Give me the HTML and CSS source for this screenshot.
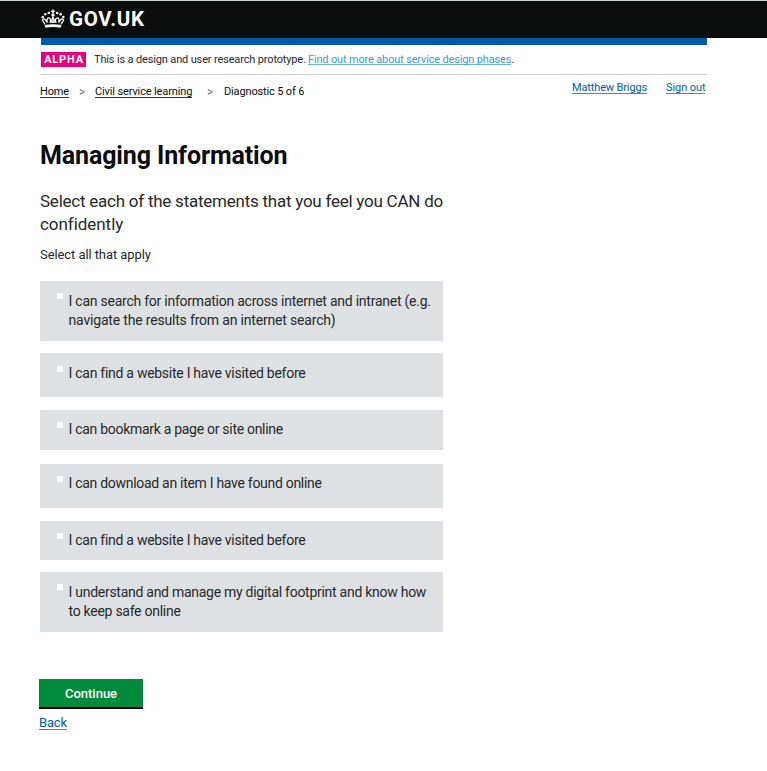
FILE: index.html
```html
<!DOCTYPE html>
<html lang="en">
<head>
<meta charset="utf-8">
<title>Managing Information</title>
<link rel="stylesheet" href="styles.css">
</head>
<body>
<header class="top">
  <svg class="crown" viewBox="0 0 24 20" width="24" height="20" aria-hidden="true">
    <g fill="#fff">
      <path d="M11.200 0.500h1.600v1.200h1.300v1.300h-1.300v1.200h-1.600V3H9.900V1.700h1.300z"/>
      <circle cx="12" cy="6" r="1.700"/>
      <circle cx="7.800" cy="4" r="1.300"/><circle cx="16.200" cy="4" r="1.300"/>
      <circle cx="4.300" cy="5.200" r="1.300"/><circle cx="19.700" cy="5.200" r="1.300"/>
      <circle cx="1.700" cy="8" r="1.300"/><circle cx="22.300" cy="8" r="1.300"/>
      <path d="M3.800 16Q12 14.300 20.200 16L19.700 18.700Q12 17.500 4.300 18.700z"/>
    </g>
    <g fill="none" stroke="#fff" stroke-width="1.300">
      <path d="M4.100 15.500L1.400 11Q2.500 9 4.100 10.500L6.200 13.500Q5.500 9 7.600 8.800T9.700 13L12 8.500L14.300 13Q14.300 9 16.400 8.800T17.800 13.500L19.900 10.500Q21.500 9 22.600 11L19.900 15.500"/>
      <path d="M8.300 13.200H15.700M12 8v6"/>
    </g>
  </svg>
  <span class="brand">GOV.UK</span>
</header>
<div class="page">
  <div class="phase">
    <strong class="tag">ALPHA</strong>
    <span class="phase-text">This is a design and user research prototype.</span>
    <span class="phase-more"><a href="#">Find out more about service design phases</a>.</span>
  </div>
  <div class="nav">
    <nav class="crumbs">
      <a class="home" href="#">Home</a><span class="sep">&gt;</span><a class="csl" href="#">Civil service learning</a><span class="sep wide">&gt;</span><span class="step">Diagnostic 5 of 6</span>
    </nav>
    <div class="account"><a class="user" href="#">Matthew Briggs</a><a class="out" href="#">Sign out</a></div>
  </div>
  <main>
    <h1>Managing Information</h1>
    <h2>Select each of the statements that you feel you CAN do<br><span class="wrap">confidently</span></h2>
    <p class="hint">Select all that apply</p>
    <div class="options">
      <div class="option two"><i class="box"></i><span><span class="l1">I can search for information across internet and intranet (e.g.</span><br><span class="l2">navigate the results from an internet search)</span></span></div>
      <div class="option tall"><i class="box low"></i><span>I can find a website I have visited before</span></div>
      <div class="option short"><i class="box"></i><span class="l4">I can bookmark a page or site online</span></div>
      <div class="option tall fourth"><i class="box"></i><span class="l4">I can download an item I have found online</span></div>
      <div class="option short fifth"><i class="box"></i><span>I can find a website I have visited before</span></div>
      <div class="option two last"><i class="box"></i><span>I understand and manage my digital footprint and know how<br>to keep safe online</span></div>
    </div>
    <button class="continue" type="button">Continue</button>
    <a class="back" href="#">Back</a>
  </main>
</div>
</body>
</html>
```
FILE: styles.css
```css
* { box-sizing: border-box; }
body { margin: 0; background: #fff; color: #262829; font-family: Roboto, "Liberation Sans", sans-serif; white-space: nowrap; }
a { color: #005ea5; text-decoration: none; }
.top { height: 38px; background: #0b0c0c; border-top: 1px solid #cdd5d1; padding: 8px 0 0 41px; display: flex; }
.crown { display: block; }
.brand { color: #fff; font-size: 20.5px; font-weight: 700; line-height: 21px; margin-left: 4px; letter-spacing: 0.7px; }
.page { margin-left: 40px; width: 667px; }
.phase { margin-left: 1px; height: 37px; border-top: 7px solid #005aa9; border-bottom: 1px solid #c9cbcc; display: flex; padding-top: 7px; font-size: 11px; line-height: 15px; }
.tag { background: #e6007e; color: #fff; width: 45px; height: 15px; text-align: center; font-size: 11px; font-weight: 700; letter-spacing: 0.8px; padding-left: 1px; }
.phase-text { margin-left: 8px; width: 214px; letter-spacing: -0.15px; }
.phase-more { letter-spacing: -0.16px; }
.phase-more a { color: #3b9bd6; border-bottom: 1px solid #6bb5e1; }
.phase-more a, .phase-text { display: inline-block; height: 13px; line-height: 15px; }
.nav { display: flex; justify-content: space-between; font-size: 11px; line-height: 16px; }
.crumbs { display: flex; padding-top: 9px; color: #0b0c0c; }
.crumbs a { color: #0b0c0c; border-bottom: 1px solid #333; height: 14px; }
.home { width: 29px; letter-spacing: -0.2px; }
.csl { width: 97px; letter-spacing: -0.13px; }
.step { letter-spacing: -0.15px; }
.sep { width: 26px; padding-left: 10px; color: #6f777b; font-size: 12px; }
.wide { width: 32px; padding-left: 15px; }
.account { display: flex; gap: 19px; padding: 5px 2px 0 0; }
.account a { height: 14px; border-bottom: 1px solid #3f87c4; }
.user { width: 75px; letter-spacing: -0.14px; }
.out { width: 39px; letter-spacing: -0.08px; }
h1 { margin: 41px 0 0; font-size: 25px; line-height: 30px; font-weight: 700; letter-spacing: -0.12px; color: #0b0c0c; }
h2 { margin: 19px 0 0; font-size: 17px; line-height: 23px; font-weight: 400; letter-spacing: -0.24px; }
.wrap { letter-spacing: -0.05px; }
.hint { margin: 10px 0 0; font-size: 13px; line-height: 18px; letter-spacing: -0.08px; }
.options { width: 403px; margin-top: 17px; font-size: 14px; line-height: 19px; letter-spacing: -0.27px; }
.l1 { letter-spacing: -0.24px; }
.l2 { letter-spacing: -0.18px; }
.l4 { letter-spacing: -0.29px; }
.option { display: flex; background: #dee1e3; padding: 11px 0 0 17px; margin-bottom: 13px; }
.box { flex: none; width: 6px; height: 6px; background: #fff; margin: 1px 5.5px 0 0; }
.low { margin-top: 2px; }
.two { height: 60px; margin-bottom: 12px; }
.tall { height: 44px; }
.short { height: 40px; margin-bottom: 14px; }
.short, .fourth { padding-top: 10px; }
.short .box, .fourth .box { margin-top: 2px; }
.fifth { height: 39px; margin-bottom: 12px; }
.last { margin-bottom: 0; }
.continue { display: block; margin: 47px 0 0 -1px; width: 104px; height: 30px; padding: 1px 0 0; border: 0; border-bottom: 2px solid #000; background: #008a3c; color: #fff; font: 500 13px/27px Roboto, sans-serif; }
.back { display: block; width: 28px; height: 16px; margin: 5px 0 0 -1px; font-size: 13px; line-height: 18px; letter-spacing: -0.2px; border-bottom: 1px solid #3f87c4; }
```
